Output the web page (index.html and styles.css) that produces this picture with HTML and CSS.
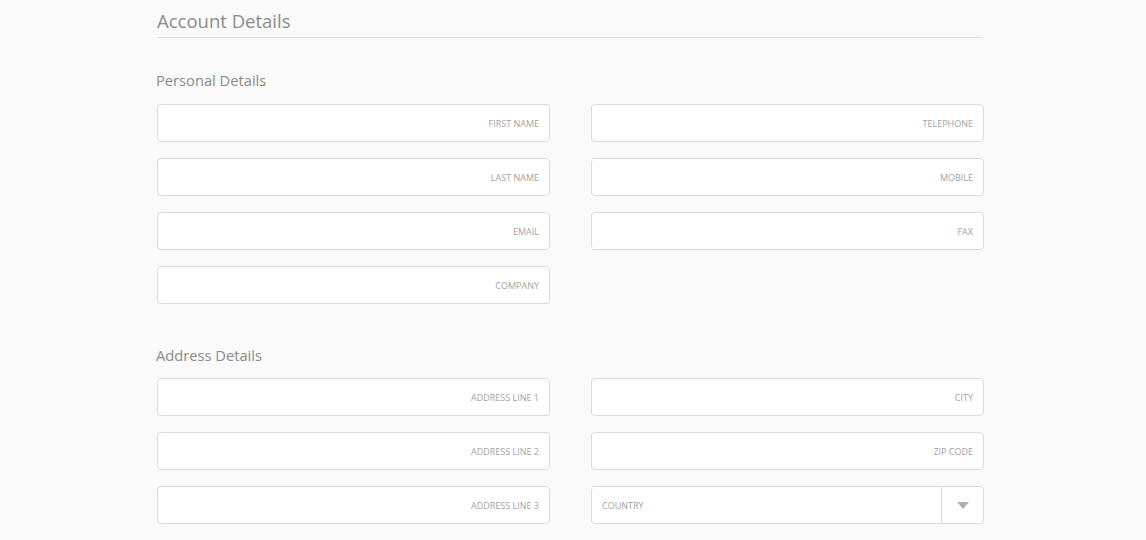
FILE: index.html
```html
<!DOCTYPE html>
<html>
<head>
<meta charset="utf-8">
<link rel="stylesheet" href="styles.css">
</head>
<body>
<div class="page">
  <h1 class="title">Account Details</h1>
  <h2 class="section">Personal Details</h2>
  <div class="grid">
    <div class="col">
      <div class="field"><span class="label">FIRST NAME</span></div>
      <div class="field"><span class="label">LAST NAME</span></div>
      <div class="field"><span class="label">EMAIL</span></div>
      <div class="field"><span class="label">COMPANY</span></div>
    </div>
    <div class="col">
      <div class="field"><span class="label">TELEPHONE</span></div>
      <div class="field"><span class="label">MOBILE</span></div>
      <div class="field"><span class="label">FAX</span></div>
    </div>
  </div>
  <h2 class="section section-address">Address Details</h2>
  <div class="grid">
    <div class="col">
      <div class="field"><span class="label">ADDRESS LINE 1</span></div>
      <div class="field"><span class="label">ADDRESS LINE 2</span></div>
      <div class="field"><span class="label">ADDRESS LINE 3</span></div>
    </div>
    <div class="col">
      <div class="field"><span class="label">CITY</span></div>
      <div class="field"><span class="label">ZIP CODE</span></div>
      <div class="field select">
        <span class="select-text">COUNTRY</span>
        <span class="select-btn"><span class="arrow"></span></span>
      </div>
    </div>
  </div>
</div>
</body>
</html>
```

FILE: styles.css
```css
html, body {
  margin: 0;
  padding: 0;
  background: #fafafa;
  font-family: "Open Sans", "Liberation Sans", sans-serif;
}
.page {
  width: 827px;
  margin-left: 157px;
}
.title {
  margin: 0;
  padding-top: 7px;
  padding-bottom: 3px;
  font-size: 18.5px;
  line-height: 27px;
  font-weight: 400;
  color: #8c8c8c;
  border-bottom: 1px solid #ddd;
  width: 825px;
}
.section {
  margin: 30px 0 12px -1px;
  font-size: 14.7px;
  line-height: 24px;
  font-weight: 400;
  color: #8c8c8c;
}
.section-address {
  margin-top: 39px;
  margin-bottom: 11px;
}
.grid {
  display: flex;
  gap: 41px;
}
.col {
  display: flex;
  flex-direction: column;
  gap: 16px;
  width: 393px;
}
.field {
  box-sizing: border-box;
  height: 38px;
  background: #fff;
  border: 1px solid #dcdcdc;
  border-radius: 4px;
  display: flex;
  align-items: center;
  justify-content: flex-end;
  padding: 0 10px;
}
.label {
  font-size: 9px;
  color: #a3a3a3;
  padding-top: 1px;
}
.select {
  justify-content: space-between;
  padding: 0 0 0 10px;
}
.select-text {
  font-size: 9px;
  color: #a3a3a3;
  padding-top: 1px;
}
.select-btn {
  width: 41px;
  height: 100%;
  border-left: 1px solid #dcdcdc;
  display: flex;
  align-items: center;
  justify-content: center;
}
.arrow {
  width: 0;
  height: 0;
  border-left: 6px solid transparent;
  border-right: 6px solid transparent;
  border-top: 7px solid #b0b0b0;
}
```
